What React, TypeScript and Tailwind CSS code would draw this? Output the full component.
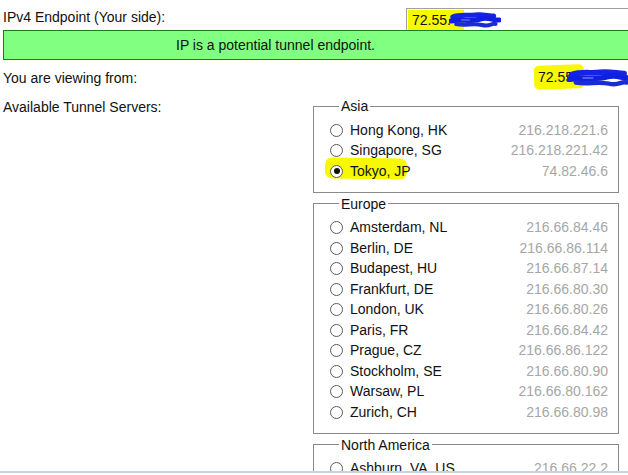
import React from "react";

type Server = { name: string; ip: string; checked?: boolean };

const regions: { title: string; servers: Server[] }[] = [
  {
    title: "Asia",
    servers: [
      { name: "Hong Kong, HK", ip: "216.218.221.6" },
      { name: "Singapore, SG", ip: "216.218.221.42" },
      { name: "Tokyo, JP", ip: "74.82.46.6", checked: true },
    ],
  },
  {
    title: "Europe",
    servers: [
      { name: "Amsterdam, NL", ip: "216.66.84.46" },
      { name: "Berlin, DE", ip: "216.66.86.114" },
      { name: "Budapest, HU", ip: "216.66.87.14" },
      { name: "Frankfurt, DE", ip: "216.66.80.30" },
      { name: "London, UK", ip: "216.66.80.26" },
      { name: "Paris, FR", ip: "216.66.84.42" },
      { name: "Prague, CZ", ip: "216.66.86.122" },
      { name: "Stockholm, SE", ip: "216.66.80.90" },
      { name: "Warsaw, PL", ip: "216.66.80.162" },
      { name: "Zurich, CH", ip: "216.66.80.98" },
    ],
  },
  {
    title: "North America",
    servers: [
      { name: "Ashburn, VA, US", ip: "216.66.22.2" },
      { name: "Chicago, IL, US", ip: "184.105.253.14" },
    ],
  },
];

// blue marker scribble used to hide part of the address
const Scribble = ({ className }: { className: string }) => (
  <svg className={className} viewBox="0 0 60 16" preserveAspectRatio="none">
    <path
      d="M4 5 C 12 2, 22 4, 30 3 S 46 4, 52 4"
      stroke="#1424e6"
      strokeWidth="5"
      fill="none"
      strokeLinecap="round"
    />
    <path
      d="M2 9 C 14 7, 26 10, 36 7 S 50 9, 58 8"
      stroke="#1020e0"
      strokeWidth="5"
      fill="none"
      strokeLinecap="round"
    />
    <path
      d="M8 12 C 18 14, 28 11, 38 13 S 48 11, 54 12"
      stroke="#1a2cd8"
      strokeWidth="4"
      fill="none"
      strokeLinecap="round"
    />
    <path d="M14 8 L 24 8" stroke="#8090f0" strokeWidth="1" />
  </svg>
);

const Radio = ({ checked }: { checked?: boolean }) => (
  <span className="flex h-[13px] w-[13px] shrink-0 items-center justify-center rounded-full border border-[#5a5a5a] bg-white">
    {checked && <span className="h-[6px] w-[6px] rounded-full bg-[#111]" />}
  </span>
);

const Region = ({ title, servers }: { title: string; servers: Server[] }) => (
  <fieldset className="mb-[3px] w-[306px] border border-[#8a8a8a] pt-[6px] pb-[10px] pl-[16px] pr-[10px]">
    <legend className="ml-[9px] px-[2px] leading-4">{title}</legend>
    {servers.map((s) => (
      <div key={s.name} className="flex h-[20.5px] items-center justify-between">
        <label className="relative flex items-center gap-[7px]">
          {s.checked && (
            <span className="absolute -left-[5px] top-[-3px] h-[21px] w-[82px] rotate-1 rounded-[7px] bg-[#f8f800]" />
          )}
          <span className="relative flex items-center gap-[7px]">
            <Radio checked={s.checked} />
            <span>{s.name}</span>
          </span>
        </label>
        <span className="text-[#a6a6a6]">{s.ip}</span>
      </div>
    ))}
  </fieldset>
);

export default function App() {
  return (
    <div className="h-[475px] w-[628px] overflow-hidden bg-white font-['Liberation_Sans',Arial,sans-serif] text-[14px] text-[#111]">
      <div className="h-[473px] overflow-hidden border-b-2 border-[#c9d3df]">
        <div className="grid h-[30px] grid-cols-[406px_1fr] pt-[8px]">
          <div className="pl-[3px] leading-[18px]">IPv4 Endpoint (Your side):</div>
          <div className="relative h-[22px] w-[260px] border-l border-t border-[#a0a0a0]">
            <span className="absolute left-[1px] top-[1px] h-[20px] w-[56px] bg-[#f8f800]" />
            <span className="absolute left-[5px] top-[3px] leading-[16px]">72.55.</span>
            <Scribble className="absolute left-[42px] top-[3px] h-[16px] w-[52px]" />
          </div>
        </div>

        <div className="ml-[3px] flex h-[30px] w-[700px] items-center border border-[#188018] bg-[#80ff80] pl-[172px]">
          IP is a potential tunnel endpoint.
        </div>

        <div className="flex h-[35px] items-center justify-between pl-[3px] pt-[1px]">
          <span>You are viewing from:</span>
          <span className="relative mr-[-4px] h-[24px] w-[97px]">
            <span className="absolute left-[-1px] top-[-1px] h-[24px] w-[50px] -rotate-2 rounded-[5px] bg-[#f8f800]" />
            <span className="absolute left-[3px] top-[3px] leading-[16px]">72.55.</span>
            <Scribble className="absolute left-[32px] top-[3px] h-[18px] w-[66px]" />
          </span>
        </div>

        <div className="mt-[3px] flex items-start">
          <div className="w-[313px] pl-[3px] pt-[1px] leading-[16px]">Available Tunnel Servers:</div>
          <div className="flex flex-col">
            {regions.map((r) => (
              <Region key={r.title} title={r.title} servers={r.servers} />
            ))}
          </div>
        </div>
      </div>
    </div>
  );
}
